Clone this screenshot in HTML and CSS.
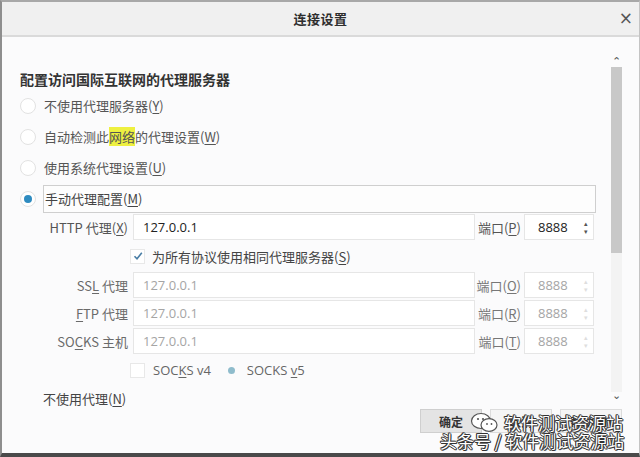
FILE: index.html
```html
<!DOCTYPE html>
<html lang="zh">
<head>
<meta charset="utf-8">
<title>连接设置</title>
<link rel="stylesheet" href="styles.css">
</head>
<body>
<div class="dialog">
  <div class="titlebar">
    <span class="title">连接设置</span>
    <span class="close">×</span>
  </div>
  <div class="body">
    <div class="content">
      <h1 class="heading">配置访问国际互联网的代理服务器</h1>
      <div class="radio-row"><span class="radio"></span><span class="rlabel">不使用代理服务器(<u>Y</u>)</span></div>
      <div class="radio-row"><span class="radio"></span><span class="rlabel">自动检测此<span class="hl">网络</span>的代理设置(<u>W</u>)</span></div>
      <div class="radio-row"><span class="radio"></span><span class="rlabel">使用系统代理设置(<u>U</u>)</span></div>
      <div class="radio-row"><span class="radio on"></span><span class="rlabel focus">手动代理配置(<u>M</u>)</span></div>

      <div class="proxy-grid">
        <span class="plabel">HTTP 代理(<u>X</u>)</span>
        <span class="field active">127.0.0.1</span>
        <span class="portlabel">端口(<u>P</u>)</span>
        <span class="port active">8888<span class="spin">▴<br>▾</span></span>

        <div class="check-row">
          <span class="checkbox checked"><svg width="12" height="12" viewBox="0 0 12 12"><path d="M2.5 6.2 L5 8.8 L9.8 2.8" fill="none" stroke="#4a7ea6" stroke-width="1.6"/></svg></span>
          <span class="clabel">为所有协议使用相同代理服务器(<u>S</u>)</span>
        </div>

        <span class="plabel dim">SS<u>L</u> 代理</span>
        <span class="field">127.0.0.1</span>
        <span class="portlabel dim">端口(<u>O</u>)</span>
        <span class="port">8888<span class="spin faint">▴<br>▾</span></span>

        <span class="plabel dim"><u>F</u>TP 代理</span>
        <span class="field">127.0.0.1</span>
        <span class="portlabel dim">端口(<u>R</u>)</span>
        <span class="port">8888<span class="spin faint">▴<br>▾</span></span>

        <span class="plabel dim">SO<u>C</u>KS 主机</span>
        <span class="field">127.0.0.1</span>
        <span class="portlabel dim">端口(<u>T</u>)</span>
        <span class="port">8888<span class="spin faint">▴<br>▾</span></span>

        <div class="socks-row">
          <span class="checkbox"></span>
          <span class="slabel">SOC<u>K</u>S v4</span>
          <span class="sdot"></span>
          <span class="slabel">SOCKS <u>v</u>5</span>
        </div>
      </div>

      <div class="noproxy">不使用代理(<u>N</u>)</div>
    </div>
    <div class="scrollbar">
      <span class="arrow">⌃</span>
      <span class="thumb"></span>
      <span class="track"></span>
      <span class="arrow down">⌄</span>
    </div>
  </div>
  <div class="footer">
    <span class="btn default">确定</span>
    <span class="btn">取消</span>
    <span class="btn">帮助(<u>H</u>)</span>
  </div>

  <div class="watermark">
    <div class="wm-line1">
      <svg class="wechat" width="30" height="22" viewBox="0 0 30 22">
        <ellipse cx="11" cy="9" rx="9.5" ry="7.5" fill="#fff" stroke="#555" stroke-width="1.2"/>
        <ellipse cx="19" cy="13" rx="8" ry="6.3" fill="#fff" stroke="#555" stroke-width="1.2"/>
        <circle cx="8" cy="7" r="1.1" fill="#555"/>
        <circle cx="13" cy="7" r="1.1" fill="#555"/>
        <circle cx="17" cy="12" r="0.9" fill="#555"/>
        <circle cx="21.5" cy="12" r="0.9" fill="#555"/>
      </svg>
      <span class="wm-text">软件测试资源站</span>
    </div>
    <div class="wm-line2"><span class="wm-text">头条号 / 软件测试资源站</span></div>
  </div>
</div>
</body>
</html>
```

FILE: styles.css
```css
* { box-sizing: border-box; }
html, body { margin: 0; padding: 0; }
body {
  width: 640px;
  height: 457px;
  overflow: hidden;
  background: #fff;
  font-family: "Noto Sans CJK SC", "Noto Sans", sans-serif;
  font-size: 13px;
  color: #333;
}
u { text-decoration: underline; text-underline-offset: 2px; }

.dialog {
  position: relative;
  width: 640px;
  height: 457px;
  display: flex;
  flex-direction: column;
  background: #fbfbfc;
  border-left: 2px solid #8e8e8e;
  border-top: 2px solid #a8a8a8;
  border-right: 1px solid #c4c4c4;
  border-bottom: 4px solid #4a4a4a;
}

.titlebar {
  height: 35px;
  flex: none;
  background: #f0f0f0;
  border-bottom: 2px solid #dadada;
  display: flex;
  align-items: center;
  justify-content: center;
  position: relative;
}
.title {
  font-weight: bold;
  font-size: 13px;
  color: #2e2e2e;
  letter-spacing: 0.5px;
}
.close {
  position: absolute;
  right: 6px;
  top: 6px;
  font-family: "DejaVu Sans", sans-serif;
  font-size: 17px;
  color: #555;
  line-height: 20px;
}

.body {
  height: 372px;
  flex: none;
  display: flex;
}
.content {
  flex: 1;
  padding: 32px 14px 0 18px;
  min-width: 0;
}
.heading {
  margin: 0 0 1px 0;
  font-size: 14px;
  line-height: 20px;
  font-weight: bold;
  color: #333;
}

.radio-row {
  height: 31px;
  display: flex;
  align-items: center;
}
.radio {
  width: 16px;
  height: 16px;
  border-radius: 50%;
  border: 1px solid #e2e2e2;
  background: #fff;
  flex: none;
  display: flex;
  align-items: center;
  justify-content: center;
}
.radio.on::after {
  content: "";
  width: 8px;
  height: 8px;
  border-radius: 50%;
  background: #2e8bc0;
}
.rlabel {
  margin-left: 8px;
  color: #555;
  line-height: 20px;
}
.rlabel.focus {
  flex: 1;
  margin-left: 7px;
  margin-right: 0;
  height: 28px;
  padding-left: 1px;
  display: flex;
  align-items: center;
  border: 1px solid #cfcfcf;
  background: #fdfdfd;
  color: #444;
}
.hl { background: #eef040; }

.proxy-grid {
  display: grid;
  grid-template-columns: 113px 342px 49px 70px;
  grid-template-rows: 26px 28px 26px 26px 26px 28px;
  row-gap: 2px;
  align-items: center;
}
.plabel {
  text-align: right;
  padding-right: 5px;
  color: #555;
  white-space: nowrap;
}
.plabel.dim { color: #6a6a6a; }
.field, .port {
  height: 26px;
  background: #fff;
  border: 1px solid #e6e6e6;
  display: flex;
  align-items: center;
  padding-left: 9px;
  color: #a5a5a5;
  font-family: "Open Sans", "Noto Sans", sans-serif;
  font-size: 13px;
}
.field.active, .port.active { color: #222; }
.portlabel {
  text-align: right;
  padding-right: 3px;
  color: #555;
  white-space: nowrap;
}
.portlabel.dim { color: #777; }
.port {
  padding-left: 13px;
  position: relative;
}
.spin {
  position: absolute;
  right: 5px;
  top: 5px;
  font-size: 7px;
  line-height: 8px;
  color: #555;
}
.spin.faint { color: #dedede; }

.check-row {
  grid-column: 2 / 5;
  display: flex;
  align-items: center;
}
.checkbox {
  width: 15px;
  height: 15px;
  margin-left: -3px;
  border: 1px solid #e8e8e8;
  background: #fff;
  display: flex;
  align-items: center;
  justify-content: center;
  flex: none;
}
.clabel {
  margin-left: 7px;
  color: #444;
}

.socks-row {
  grid-column: 2 / 5;
  display: flex;
  align-items: center;
}
.slabel {
  margin-left: 8px;
  color: #666;
  font-family: "Open Sans", "Noto Sans", sans-serif;
}
.sdot {
  width: 7px;
  height: 7px;
  border-radius: 50%;
  background: #8fbccc;
  margin-left: 17px;
  flex: none;
}
.sdot + .slabel { margin-left: 12px; }

.noproxy {
  margin-top: 1px;
  height: 28px;
  line-height: 28px;
  padding-left: 23px;
  color: #444;
}

.scrollbar {
  width: 13px;
  flex: none;
  margin-right: 16px;
  padding-top: 17px;
  padding-bottom: 4px;
  display: flex;
  flex-direction: column;
  align-items: stretch;
}
.arrow {
  height: 13px;
  text-align: center;
  font-family: "DejaVu Sans", sans-serif;
  font-size: 11px;
  line-height: 16px;
  color: #555;
}
.arrow.down { line-height: 8px; }
.thumb {
  height: 186px;
  background: #c8c8c8;
  margin: 0 1px;
}
.track {
  flex: 1;
  background: #f3f3f3;
  margin: 0 1px;
}

.footer {
  flex: 1;
  display: flex;
  justify-content: flex-end;
  align-items: flex-start;
  gap: 8px;
  padding-right: 17px;
}
.btn {
  width: 62px;
  height: 24px;
  border: 1px solid #dcdcdc;
  background: #f5f5f5;
  display: flex;
  align-items: center;
  justify-content: center;
  color: #333;
  font-size: 12px;
  font-weight: bold;
}
.btn.default {
  background: #e4e4e4;
  border-color: #cfcfcf;
}

.watermark {
  position: absolute;
  left: 416px;
  top: 410px;
  width: 222px;
  pointer-events: none;
}
.wm-line1 {
  display: flex;
  align-items: center;
  padding-left: 52px;
  height: 22px;
}
.wechat { flex: none; margin-right: 4px; }
.wm-text {
  font-family: "Noto Sans CJK SC", sans-serif;
  font-size: 17px;
  line-height: 20px;
  color: #fff;
  text-shadow: -1px 0 #333, 1px 0 #333, 0 -1px #333, 0 1px #333, 1px 1px #555, -1px -1px #555;
  white-space: nowrap;
}
.wm-line2 {
  height: 22px;
  padding-left: 22px;
  margin-top: -3px;
}
```
